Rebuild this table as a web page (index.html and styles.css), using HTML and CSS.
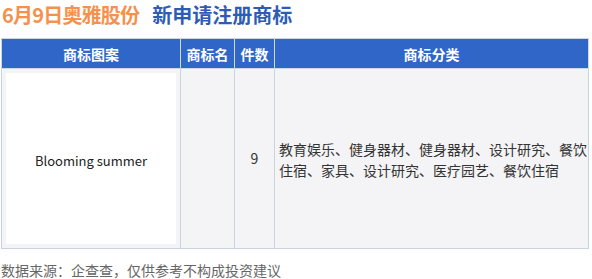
FILE: index.html
```html
<!DOCTYPE html>
<html lang="zh">
<head>
<meta charset="utf-8">
<link rel="stylesheet" href="styles.css">
</head>
<body>
<div class="title"><span class="t-orange">6月9日奥雅股份</span><span class="t-blue">新申请注册商标</span></div>
<table class="tm">
  <colgroup>
    <col class="c1"><col class="c2"><col class="c3"><col class="c4">
  </colgroup>
  <thead>
    <tr><th>商标图案</th><th>商标名</th><th>件数</th><th>商标分类</th></tr>
  </thead>
  <tbody>
    <tr>
      <td class="img-cell"><div class="img-box">Blooming summer</div></td>
      <td></td>
      <td class="num">9</td>
      <td class="cats">教育娱乐、健身器材、健身器材、设计研究、餐饮住宿、家具、设计研究、医疗园艺、餐饮住宿</td>
    </tr>
  </tbody>
</table>
<div class="source">数据来源：企查查，仅供参考不构成投资建议</div>
</body>
</html>
```
FILE: styles.css
```css
html, body {
  margin: 0;
  padding: 0;
  background: #ffffff;
}
body {
  font-family: "Noto Sans CJK SC", "Noto Sans", sans-serif;
}
.title {
  font-size: 20px;
  line-height: 26px;
  font-weight: bold;
  padding: 2px 0 0 2px;
  white-space: nowrap;
}
.t-orange {
  color: #f5914c;
  letter-spacing: -0.8px;
}
.t-blue {
  color: #2c5cb5;
  margin-left: 13px;
}
.tm {
  margin-top: 10px;
  margin-left: 1px;
  width: 588px;
  border-collapse: collapse;
  table-layout: fixed;
  font-size: 14px;
}
.c1 { width: 179px; }
.c2 { width: 54px; }
.c3 { width: 40px; }
.tm th {
  background: #2f66c8;
  color: #ffffff;
  font-weight: bold;
  height: 29px;
  padding: 0;
  border: 1px solid #cdd6e3;
  line-height: 20px;
}
.tm td {
  background: #f4f4f6;
  border: 1px solid #c9d3e1;
  padding: 0;
  color: #333333;
  line-height: 21px;
}
.tm td.img-cell {
  padding: 4px;
}
.img-box {
  background: #ffffff;
  height: 171px;
  display: flex;
  align-items: center;
  justify-content: center;
  font-size: 13px;
  color: #222222;
  padding-top: 3px;
  box-sizing: border-box;
}
.tm td.num {
  text-align: center;
}
.tm td.cats {
  padding: 3px 0 0 4px;
  word-break: break-all;
}
.source {
  margin-top: 11px;
  padding-left: 1px;
  font-size: 14px;
  line-height: 20px;
  color: #666666;
  white-space: nowrap;
}
```
